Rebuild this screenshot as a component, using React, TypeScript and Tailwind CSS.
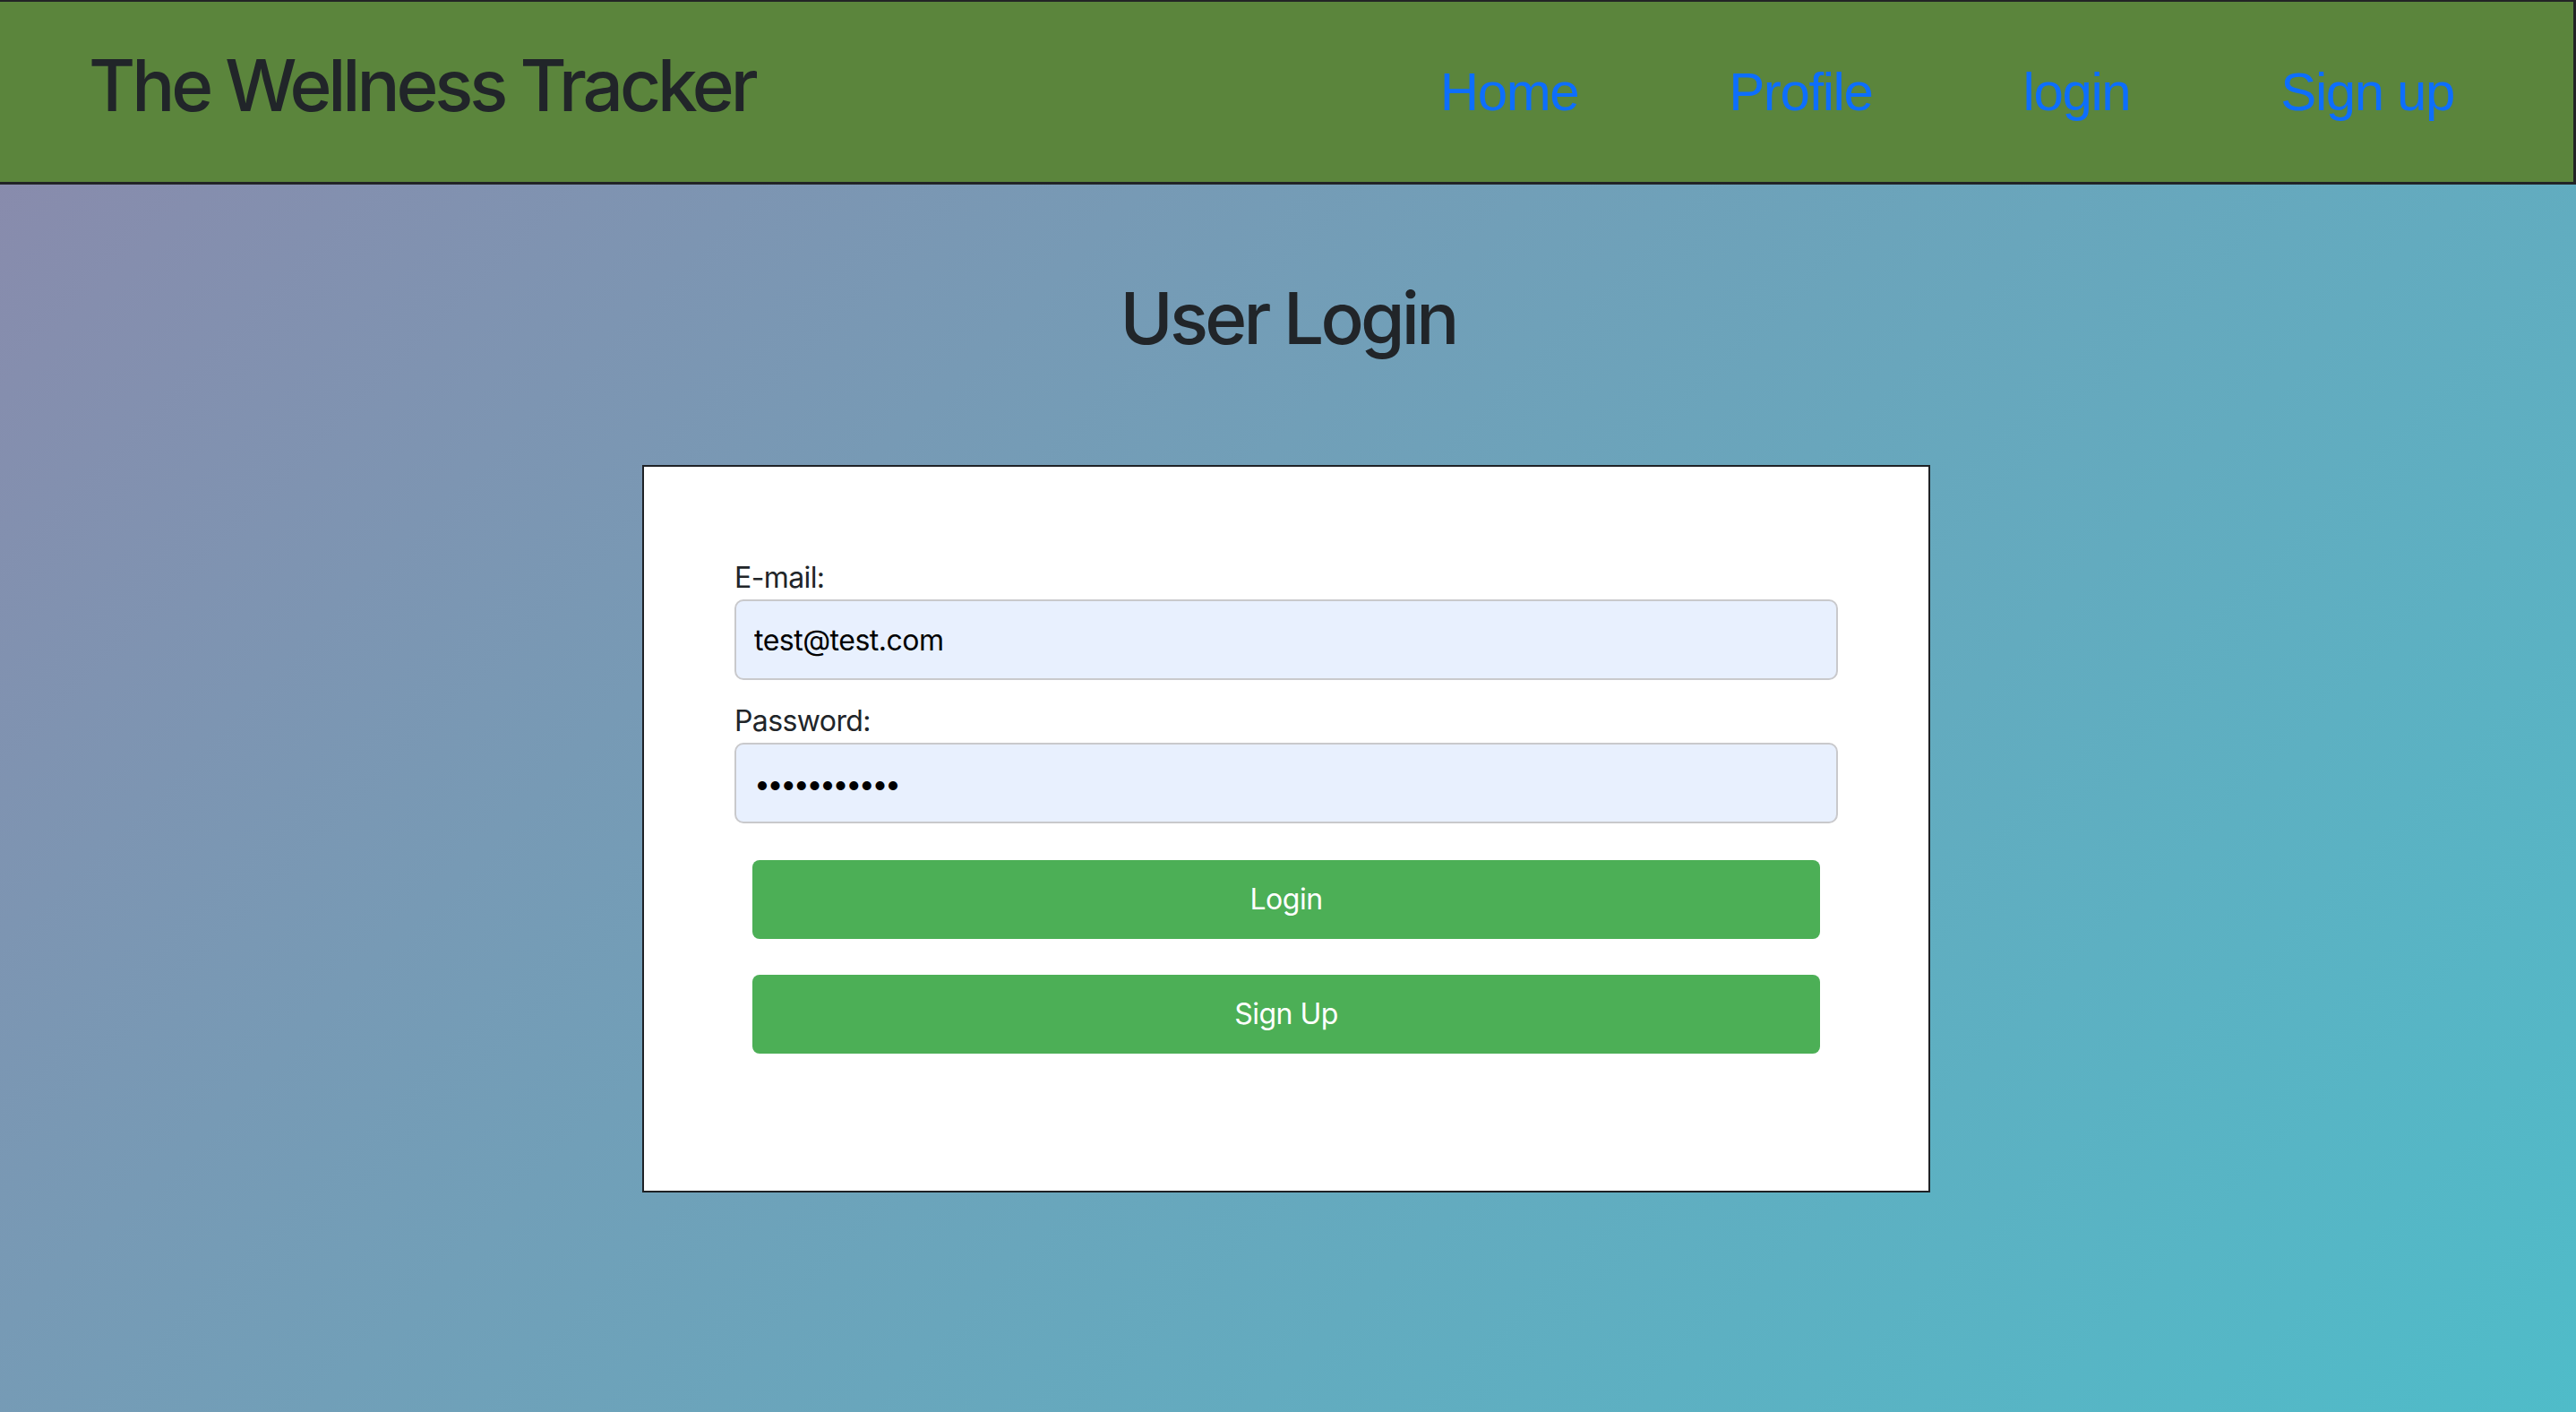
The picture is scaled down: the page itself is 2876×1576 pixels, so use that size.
import React from "react";

export default function App() {
  return (
    <div className="min-h-screen w-full flex flex-col bg-[linear-gradient(135deg,#8b89ab_0%,#4fbcc9_100%)]">
      <header className="h-[206px] w-full shrink-0 bg-[#5b853c] border-t-2 border-b-[3px] border-r-[3px] border-[#222426] flex items-start justify-between">
        <h1 className="pl-[99px] pt-[53px] text-[80px] leading-[80px] text-[#212529] font-medium font-['Inter','Liberation_Sans',sans-serif] tracking-[-4.1px]">
          The Wellness Tracker
        </h1>
        <nav className="flex gap-[168px] pr-[133px] pt-[71px] text-[60px] leading-[60px] text-[#0d6efd] font-['Liberation_Sans',Arial,sans-serif] tracking-[-1.4px]">
          <a href="#">Home</a>
          <a href="#">Profile</a>
          <a href="#">login</a>
          <a href="#">Sign up</a>
        </nav>
      </header>

      <main className="flex flex-col items-center font-['Inter','Noto_Sans',sans-serif] text-[#212529]">
        <h2 className="mt-[109px] text-[80px] leading-[80px] font-medium tracking-[-3.8px]">User Login</h2>

        <div className="mt-[124px] mr-[4px] w-[1438px] bg-white border-2 border-[#1f2226] px-[101px] pt-[100px] pb-[153px] flex flex-col">
          <label className="text-[32px] leading-[48px] text-[#212529] tracking-[-0.6px]">E-mail:</label>
          <input
            readOnly
            type="text"
            value="test@test.com"
            className="h-[90px] w-full rounded-[10px] border-2 border-[#c9c9cc] bg-[#e8f0fe] pl-5 text-[32px] text-black tracking-[-0.5px] outline-none mb-[22px]"
          />
          <label className="text-[32px] leading-[48px] text-[#212529] tracking-[-0.6px]">Password:</label>
          <input
            readOnly
            type="password"
            value="password123"
            className="h-[90px] w-full rounded-[10px] border-2 border-[#c9c9cc] bg-[#e8f0fe] pl-5 text-[32px] text-black tracking-[-3.4px] outline-none"
          />
          <button className="mt-[41px] mx-5 h-[88px] rounded-[8px] bg-[#4caf56] text-white text-[32px] tracking-[-0.5px]">
            Login
          </button>
          <button className="mt-10 mx-5 h-[88px] rounded-[8px] bg-[#4caf56] text-white text-[32px] tracking-[-0.5px]">
            Sign Up
          </button>
        </div>
      </main>
    </div>
  );
}
